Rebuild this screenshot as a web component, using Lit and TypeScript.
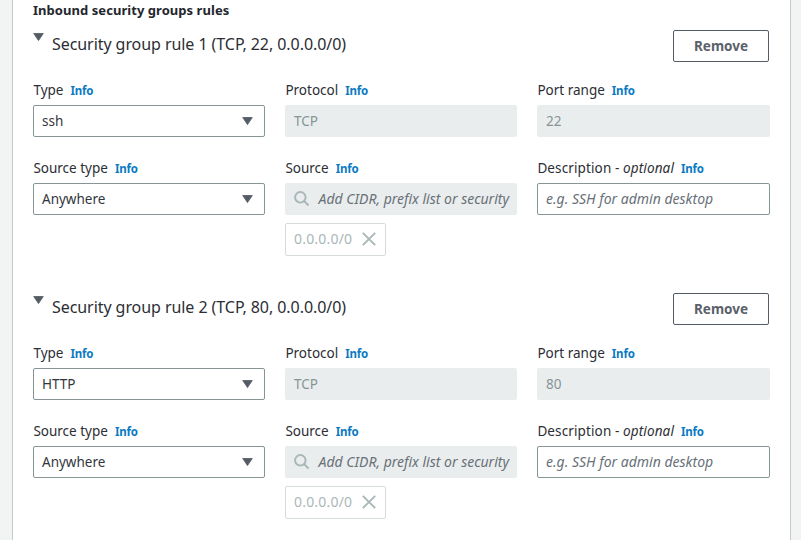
import { LitElement, html, css } from "lit";
import { customElement, property } from "lit/decorators.js";

interface Rule {
  index: number;
  type: string;
  port: string;
}

@customElement("form-field")
class FormField extends LitElement {
  @property() label = "";
  @property() note = "";

  static styles = css`
    :host { display: block; }
    .label {
      display: flex;
      align-items: baseline;
      height: 22px;
      margin-bottom: 4px;
      padding-left: 0.4px;
      line-height: 22px;
      font-size: 13.5px;
      color: #2b2e34;
      white-space: pre;
    }
    .wide { letter-spacing: 0.12px; }
    .note { font-style: italic; }
    .info {
      margin-left: 7px;
      font-size: 11.5px;
      font-weight: 700;
      letter-spacing: -0.2px;
      color: #0a7ac2;
    }
  `;

  render() {
    return html`
      <div class="label">${this.note
        ? html`<span class="wide">${this.label} - <span class="note">${this.note}</span></span>`
        : html`<span>${this.label}</span>`}<span class="info">Info</span></div>
      <slot></slot>
    `;
  }
}

@customElement("app-root")
class AppRoot extends LitElement {
  static styles = css`
    :host {
      display: block;
      height: 540px;
      overflow: hidden;
      background: #f2f3f3;
      font-family: "Noto Sans", sans-serif;
    }
    * { box-sizing: border-box; }
    .panel {
      height: 540px;
      margin: 0 10px 0 12px;
      padding: 0 20px;
      background: #fff;
      border: solid #c3cacc;
      border-width: 0 1px;
    }
    .heading {
      height: 30px;
      line-height: 20px;
      font-size: 13px;
      font-weight: 700;
      letter-spacing: 0.05px;
      color: #23262c;
    }
    .rule { height: 263px; }
    .top { display: flex; height: 49px; padding-right: 1px; }
    .arrow { flex: none; }
    .caret { margin: 3px 8px 0 0; }
    .title {
      flex: 1;
      line-height: 28px;
      font-size: 16px;
      letter-spacing: -0.065px;
      color: #2b2e34;
    }
    .remove {
      width: 96px;
      height: 32px;
      padding: 0;
      border: 1px solid #545b64;
      border-radius: 2px;
      background: #fff;
      font: 700 13.5px/30px "Noto Sans", sans-serif;
      color: #5a616a;
    }
    .grid {
      display: grid;
      grid-template-columns: 232px 232px 233px;
      gap: 20px;
    }
    .box {
      display: flex;
      align-items: center;
      justify-content: space-between;
      height: 32px;
      padding: 0 11px 0 8px;
      border: 1px solid #879596;
      border-radius: 2px;
      font-size: 13.5px;
      line-height: 30px;
      color: #33363c;
      white-space: nowrap;
      overflow: hidden;
    }
    .off {
      background: #eaeded;
      border-color: #eaeded;
      color: #879596;
    }
    .hint { font-size: 14px; font-style: italic; color: #687078; }
    .search { justify-content: flex-start; gap: 9px; padding-right: 7px; }
    .token {
      display: flex;
      align-items: center;
      gap: 10px;
      width: 101px;
      height: 33px;
      margin-top: 8px;
      padding: 0 0 2px 8px;
      border: 1px solid #d5dbdb;
      border-radius: 2px;
      font-size: 14px;
      line-height: 29px;
      letter-spacing: 0.2px;
      color: #aab7b8;
    }
  `;

  private arrow(extra = "") {
    return html`<svg class="arrow ${extra}" width="11" height="8" viewBox="0 0 11 8">
      <path d="M.7 .5h9.6L5.5 7.6z" fill="#545b64" stroke="#545b64" stroke-width=".8" stroke-linejoin="round" />
    </svg>`;
  }

  private rule(r: Rule) {
    return html`<section class="rule">
      <div class="top">
        ${this.arrow("caret")}
        <div class="title">Security group rule ${r.index} (TCP, ${r.port}, 0.0.0.0/0)</div>
        <button class="remove">Remove</button>
      </div>
      <div class="grid">
        <form-field label="Type"><div class="box"><span>${r.type}</span>${this.arrow()}</div></form-field>
        <form-field label="Protocol"><div class="box off">TCP</div></form-field>
        <form-field label="Port range"><div class="box off">${r.port}</div></form-field>
        <form-field label="Source type"><div class="box"><span>Anywhere</span>${this.arrow()}</div></form-field>
        <form-field label="Source">
          <div class="box off search">
            <svg width="16" height="16" viewBox="0 0 16 16" fill="none" stroke="#aab7b8" stroke-width="2">
              <circle cx="6.5" cy="6.3" r="5.4" />
              <path d="M10.3 10.1l4.7 4.6" />
            </svg>
            <span class="hint">Add CIDR, prefix list or security</span>
          </div>
          <div class="token">
            <span>0.0.0.0/0</span>
            <svg width="14" height="14" viewBox="0 0 14 14" stroke="#aab7b8" stroke-width="1.9">
              <path d="M.8 .8l12.4 12.4M13.2 .8L.8 13.2" />
            </svg>
          </div>
        </form-field>
        <form-field label="Description" note="optional">
          <div class="box hint">e.g. SSH for admin desktop</div>
        </form-field>
      </div>
    </section>`;
  }

  render() {
    return html`<main class="panel">
      <div class="heading">Inbound security groups rules</div>
      ${this.rule({ index: 1, type: "ssh", port: "22" })}
      ${this.rule({ index: 2, type: "HTTP", port: "80" })}
    </main>`;
  }
}
